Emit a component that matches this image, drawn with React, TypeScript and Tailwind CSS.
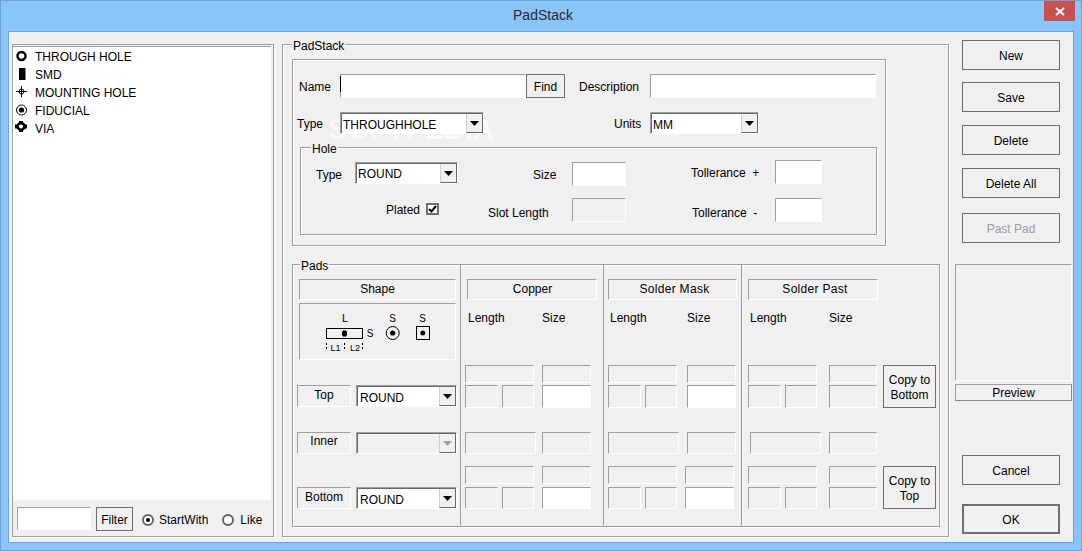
import type { ReactNode } from "react";

const etched = "border border-[#a0a0a0] shadow-[1px_1px_0_#fff,inset_1px_1px_0_#fff]";
const sunken = "border border-[#a0a0a0] border-r-white border-b-white";

function Box({ className = "", children }: { className?: string; children?: ReactNode }) {
  return <div className={`shrink-0 ${sunken} ${className}`}>{children}</div>;
}

function Btn({ className = "", children, disabled }: { className?: string; children: ReactNode; disabled?: boolean }) {
  return (
    <button
      className={`flex shrink-0 items-center justify-center border border-[#6f6f6f] bg-[#f0f0f0] pt-[2px] text-center leading-[15px] ${
        disabled ? "text-[#a0a0a0]" : "text-black"
      } ${className}`}
    >
      {children}
    </button>
  );
}

function Combo({
  className = "",
  value,
  disabled,
  textClass = "pl-[1px] leading-[22px]",
}: {
  className?: string;
  value?: string;
  disabled?: boolean;
  textClass?: string;
}) {
  return (
    <div className={`relative flex shrink-0 border border-[#a0a0a0] border-r-white border-b-white ${className}`}>
      <div
        className={`flex min-w-0 flex-1 border-t border-l border-[#696969] ${disabled ? "bg-[#f0f0f0]" : "bg-white"}`}
      >
        <span className={`flex-1 text-black ${textClass}`}>{value}</span>
        <span className="flex w-[17px] items-center justify-center border-r border-b border-l border-[#696969] border-l-[#d0d0d0] bg-[#f0f0f0]">
          <svg width="9" height="5" viewBox="0 0 9 5">
            <path d="M0 0h9L4.5 5z" fill={disabled ? "#a0a0a0" : "#000"} />
          </svg>
        </span>
      </div>
    </div>
  );
}

function Group({
  title,
  className = "",
  legendClass = "",
  children,
}: {
  title?: string;
  className?: string;
  legendClass?: string;
  children: ReactNode;
}) {
  return (
    <div className={`relative shrink-0 ${etched} ${className}`}>
      {title && (
        <span className={`absolute top-[-7px] bg-[#f0f0f0] px-[1px] leading-[16px] text-black ${legendClass}`}>
          {title}
        </span>
      )}
      {children}
    </div>
  );
}

function Header({ className = "", children }: { className?: string; children: ReactNode }) {
  return (
    <Box className={`mt-[14px] flex h-[21px] items-center justify-center pb-[2px] text-black ${className}`}>
      {children}
    </Box>
  );
}

function Icon({ children }: { children: ReactNode }) {
  return (
    <svg width="16" height="16" viewBox="0 0 16 16" className="shrink-0">
      {children}
    </svg>
  );
}

const items: { name: string; icon: ReactNode }[] = [
  {
    name: "THROUGH HOLE",
    icon: <circle cx="8.5" cy="8" r="4" fill="none" stroke="#000" strokeWidth="2.6" />,
  },
  { name: "SMD", icon: <rect x="6" y="2" width="6.5" height="12" fill="#000" /> },
  {
    name: "MOUNTING HOLE",
    icon: (
      <g fill="none" stroke="#000" strokeWidth="1">
        <circle cx="8.5" cy="7.5" r="2.5" />
        <path d="M8.5 2v11M3 7.5h11" />
      </g>
    ),
  },
  {
    name: "FIDUCIAL",
    icon: (
      <g>
        <circle cx="8.5" cy="8" r="5" fill="none" stroke="#000" strokeWidth="1" />
        <circle cx="8.5" cy="8" r="2.6" fill="#000" />
      </g>
    ),
  },
  {
    name: "VIA",
    icon: (
      <g>
        <circle cx="8" cy="6.5" r="3.4" fill="none" stroke="#000" strokeWidth="2.6" />
        <path d="M6 1h4v2H6zM6 10h4v2H6zM2 4.5h2v4H2zM12 4.5h2v4h-2z" fill="#000" />
      </g>
    ),
  },
];

function PadDiagram() {
  return (
    <svg width="155" height="55" viewBox="0 0 155 55" fontFamily="'Liberation Sans', sans-serif" fill="#000">
      <text x="45" y="18" fontSize="11" textAnchor="middle">L</text>
      <rect x="26.5" y="24.5" width="36" height="10" fill="none" stroke="#000" />
      <path d="M43 26.5h3l1 1.5v3l-1 1.5h-3l-1-1.5v-3z" />
      <text x="70" y="33" fontSize="10" textAnchor="middle">S</text>
      <path d="M26.5 39v8M44.5 39v8M62.5 39v8" stroke="#000" strokeDasharray="2 2" />
      <text x="35.5" y="47" fontSize="9" textAnchor="middle">L1</text>
      <text x="55" y="47" fontSize="9" textAnchor="middle">L2</text>
      <text x="92.5" y="18" fontSize="10" textAnchor="middle">S</text>
      <circle cx="92.7" cy="29" r="6.5" fill="none" stroke="#000" />
      <circle cx="92.7" cy="29" r="2.6" />
      <text x="122.5" y="18" fontSize="10" textAnchor="middle">S</text>
      <rect x="116.5" y="22.5" width="13" height="13" fill="none" stroke="#000" />
      <circle cx="122.8" cy="29" r="2.5" />
    </svg>
  );
}

export default function App() {
  return (
    <div className="flex h-[551px] w-[1082px] flex-col overflow-hidden border border-[#6fa3d8] bg-[#8ac4f9] font-['Liberation_Sans',Arial,sans-serif] text-[12px] text-black">
      <div className="relative h-[30px] shrink-0 pt-[5px] pl-[4px] text-center text-[14px] leading-[18px] text-[#2b2b2b]">
        PadStack
        <div className="absolute top-0 right-[6px] flex h-[20px] w-[31px] items-center justify-center bg-[#c75050]">
          <svg width="10" height="9" viewBox="0 0 10 9">
            <path d="M1 1l8 7M9 1L1 8" stroke="#fff" strokeWidth="2" />
          </svg>
        </div>
      </div>

      <div className="ml-[7px] flex h-[512px] w-[1066px] border border-[#6fa3d8] bg-[#f0f0f0]">
        {/* list */}
        <div className="mt-[12px] ml-[3px] flex h-[493px] w-[262px] shrink-0 flex-col border border-[#a0a0a0] pt-[1px] pr-[2px] shadow-[1px_1px_0_#fff]">
          <div className="h-[454px] border-t border-[#a0a0a0] bg-white pt-[1px]">
            {items.map((item) => (
              <div key={item.name} className="flex h-[18px] items-start">
                <Icon>{item.icon}</Icon>
                <span className="ml-[6px] leading-[18px]">{item.name}</span>
              </div>
            ))}
          </div>
          <div className="mt-[7px] flex items-start pl-[4px]">
            <Box className="h-[23px] w-[74px] bg-white" />
            <Btn className="ml-[5px] h-[24px] w-[37px]">Filter</Btn>
            <span className="mt-[7px] ml-[9px] flex h-[12px] w-[12px] items-center justify-center rounded-full border-2 border-[#666] bg-white">
              <span className="h-[4px] w-[4px] rounded-full bg-black" />
            </span>
            <span className="mt-[6px] ml-[5px] leading-[15px]">StartWith</span>
            <span className="mt-[7px] ml-[14px] h-[12px] w-[12px] rounded-full border-2 border-[#666] bg-white" />
            <span className="mt-[6px] ml-[6px] leading-[15px]">Like</span>
          </div>
        </div>

        {/* center */}
        <Group
          title="PadStack"
          legendClass="left-[9px]"
          className="mt-[12px] ml-[8px] h-[493px] w-[667px] pt-[14px] pl-[9px]"
        >
          <Group className="h-[187px] w-[594px]">
            <div className="mt-[14px] flex h-[24px] items-center">
              <span className="mt-[2px] ml-[6px] w-[41px]">Name</span>
              <Box className="relative h-[24px] w-[186px] bg-white">
                <span className="absolute top-[1px] left-[-1px] h-[16px] w-px bg-black" />
              </Box>
              <Btn className="h-[24px] w-[39px]">Find</Btn>
              <span className="mt-[2px] ml-[14px] w-[71px]">Description</span>
              <Box className="h-[24px] w-[226px] bg-white" />
            </div>
            <div className="relative mt-[14px] flex h-[22px] items-center">
              <span className="pointer-events-none absolute top-[4px] left-[35px] text-[29px] leading-[26px] font-bold text-white opacity-70">
                SOFTPEDIA
              </span>
              <span className="mt-[2px] ml-[4px] w-[43px]">Type</span>
              <Combo className="h-[22px] w-[144px]" value="THROUGHHOLE" />
              <span className="mt-[2px] ml-[130px] w-[36px]">Units</span>
              <Combo className="h-[22px] w-[109px]" value="MM" />
            </div>
            <Group title="Hole" legendClass="left-[10px]" className="mt-[13px] ml-[7px] h-[88px] w-[577px]">
              <div className="mt-[12px] flex h-[26px] items-start">
                <span className="mt-[7px] ml-[15px] w-[39px] leading-[16px]">Type</span>
                <Combo className="mt-[2px] h-[22px] w-[103px]" value="ROUND" textClass="pl-[1px] leading-[20px]" />
                <span className="mt-[7px] ml-[75px] w-[39px] leading-[16px]">Size</span>
                <Box className="mt-[2px] h-[24px] w-[54px] bg-white" />
                <span className="mt-[5px] ml-[65px] w-[84px] leading-[16px]">Tollerance&nbsp; +</span>
                <Box className="h-[24px] w-[47px] bg-white" />
              </div>
              <div className="mt-[12px] flex h-[24px] items-start">
                <span className="mt-[4px] ml-[85px] w-[40px] leading-[16px]">Plated</span>
                <span className="mt-[5px] flex h-[12px] w-[13px] items-center justify-center border-2 border-[#6f6f6f] bg-white">
                  <svg width="9" height="8" viewBox="0 0 9 8">
                    <path d="M1 4l2.5 2.5L8 1" fill="none" stroke="#000" strokeWidth="2" />
                  </svg>
                </span>
                <span className="mt-[7px] ml-[49px] w-[84px] leading-[16px]">Slot Length</span>
                <Box className="h-[24px] w-[54px]" />
                <span className="mt-[7px] ml-[66px] w-[83px] leading-[16px]">Tollerance&nbsp; -</span>
                <Box className="h-[24px] w-[47px] bg-white" />
              </div>
            </Group>
          </Group>

          <Group title="Pads" legendClass="left-[7px]" className="mt-[18px] flex h-[263px] w-[648px]">
            {/* shape */}
            <div className="w-[168px] shrink-0 border-r border-[#a0a0a0]">
              <Header className="ml-[6px] w-[157px]">Shape</Header>
              <Box className="mt-[3px] ml-[6px] h-[57px] w-[157px]">
                <PadDiagram />
              </Box>
              <div className="mt-[25px] flex h-[22px]">
                <Box className="ml-[4px] flex w-[54px] justify-center pt-[2px] leading-[15px]">Top</Box>
                <Combo className="ml-[5px] h-[22px] w-[101px]" value="ROUND" textClass="pl-[2px] leading-[22px]" />
              </div>
              <div className="mt-[25px] flex h-[22px]">
                <Box className="ml-[4px] flex w-[54px] justify-center pt-[1px] leading-[15px]">Inner</Box>
                <Combo className="ml-[5px] h-[22px] w-[101px]" disabled />
              </div>
              <div className="mt-[33px] flex h-[22px]">
                <Box className="ml-[4px] flex w-[54px] justify-center pt-[2px] leading-[15px]">Bottom</Box>
                <Combo className="ml-[5px] h-[22px] w-[101px]" value="ROUND" textClass="pl-[2px] leading-[22px]" />
              </div>
            </div>

            {/* copper */}
            <div className="w-[143px] shrink-0 border-r border-[#a0a0a0]">
              <Header className="ml-[6px] w-[130px]">
                <span className="pl-[1px]">Copper</span>
              </Header>
              <div className="mt-[10px] flex h-[16px] leading-[16px]">
                <span className="ml-[7px] w-[74px]">Length</span>
                <span>Size</span>
              </div>
              <div className="mt-[39px] flex h-[18px]">
                <Box className="ml-[4px] w-[69px]" />
                <Box className="ml-[8px] w-[49px]" />
              </div>
              <div className="mt-[2px] flex h-[23px]">
                <Box className="ml-[4px] w-[33px]" />
                <Box className="ml-[4px] w-[32px]" />
                <Box className="ml-[8px] w-[49px] bg-white" />
              </div>
              <div className="mt-[24px] flex h-[22px]">
                <Box className="ml-[4px] w-[71px]" />
                <Box className="ml-[6px] w-[49px]" />
              </div>
              <div className="mt-[12px] flex h-[18px]">
                <Box className="ml-[4px] w-[69px]" />
                <Box className="ml-[8px] w-[49px]" />
              </div>
              <div className="mt-[3px] flex h-[22px]">
                <Box className="ml-[4px] w-[33px]" />
                <Box className="ml-[4px] w-[32px]" />
                <Box className="ml-[8px] w-[49px] bg-white" />
              </div>
            </div>

            {/* solder mask */}
            <div className="w-[138px] shrink-0 border-r border-[#a0a0a0]">
              <Header className="ml-[4px] w-[129px] pl-[4px] tracking-[0.3px]">Solder Mask</Header>
              <div className="mt-[10px] flex h-[16px] leading-[16px]">
                <span className="ml-[6px] w-[77px]">Length</span>
                <span>Size</span>
              </div>
              <div className="mt-[39px] flex h-[18px]">
                <Box className="ml-[4px] w-[69px]" />
                <Box className="ml-[10px] w-[49px]" />
              </div>
              <div className="mt-[2px] flex h-[23px]">
                <Box className="ml-[4px] w-[33px]" />
                <Box className="ml-[4px] w-[32px]" />
                <Box className="ml-[10px] w-[49px] bg-white" />
              </div>
              <div className="mt-[24px] flex h-[22px]">
                <Box className="ml-[4px] w-[71px]" />
                <Box className="ml-[8px] w-[49px]" />
              </div>
              <div className="mt-[12px] flex h-[18px]">
                <Box className="ml-[4px] w-[69px]" />
                <Box className="ml-[8px] w-[49px]" />
              </div>
              <div className="mt-[3px] flex h-[22px]">
                <Box className="ml-[4px] w-[33px]" />
                <Box className="ml-[4px] w-[32px]" />
                <Box className="ml-[8px] w-[49px] bg-white" />
              </div>
            </div>

            {/* solder past */}
            <div className="flex-1">
              <Header className="ml-[6px] w-[130px] pl-[4px] tracking-[0.3px]">Solder Past</Header>
              <div className="mt-[10px] flex h-[16px] leading-[16px]">
                <span className="ml-[8px] w-[79px]">Length</span>
                <span>Size</span>
              </div>
              <div className="mt-[39px] flex h-[43px]">
                <div className="w-[135px] shrink-0">
                  <div className="flex h-[18px]">
                    <Box className="ml-[6px] w-[69px]" />
                    <Box className="ml-[12px] w-[48px]" />
                  </div>
                  <div className="mt-[2px] flex h-[23px]">
                    <Box className="ml-[6px] w-[33px]" />
                    <Box className="ml-[4px] w-[32px]" />
                    <Box className="ml-[12px] w-[48px]" />
                  </div>
                </div>
                <Btn className="ml-[6px] h-[43px] w-[53px]">
                  Copy to
                  <br />
                  Bottom
                </Btn>
              </div>
              <div className="mt-[24px] flex h-[22px]">
                <Box className="ml-[8px] w-[71px]" />
                <Box className="ml-[8px] w-[48px]" />
              </div>
              <div className="mt-[12px] flex h-[43px]">
                <div className="w-[135px] shrink-0">
                  <div className="flex h-[18px]">
                    <Box className="ml-[6px] w-[69px]" />
                    <Box className="ml-[12px] w-[48px]" />
                  </div>
                  <div className="mt-[3px] flex h-[22px]">
                    <Box className="ml-[6px] w-[33px]" />
                    <Box className="ml-[4px] w-[32px]" />
                    <Box className="ml-[12px] w-[48px]" />
                  </div>
                </div>
                <Btn className="ml-[6px] h-[43px] w-[53px]">
                  Copy to
                  <br />
                  Top
                </Btn>
              </div>
            </div>
          </Group>
        </Group>

        {/* buttons */}
        <div className="mt-[8px] ml-[6px] flex w-[117px] shrink-0 flex-col">
          <Btn className="ml-[7px] h-[30px] w-[98px]">New</Btn>
          <Btn className="mt-[12px] ml-[7px] h-[30px] w-[98px]">Save</Btn>
          <Btn className="mt-[13px] ml-[7px] h-[30px] w-[98px]">Delete</Btn>
          <Btn className="mt-[13px] ml-[7px] h-[30px] w-[98px]">Delete All</Btn>
          <Btn className="mt-[15px] ml-[7px] h-[30px] w-[98px]" disabled>
            Past Pad
          </Btn>
          <Box className="mt-[21px] h-[117px] w-[117px]" />
          <div className="mt-[3px] flex h-[17px] w-[117px] items-center justify-center border border-[#a0a0a0] border-r-[#888] border-b-[#888]">
            Preview
          </div>
          <Btn className="mt-[54px] ml-[7px] h-[30px] w-[98px]">Cancel</Btn>
          <Btn className="mt-[19px] ml-[7px] h-[30px] w-[98px] border-2">OK</Btn>
        </div>
      </div>
    </div>
  );
}
